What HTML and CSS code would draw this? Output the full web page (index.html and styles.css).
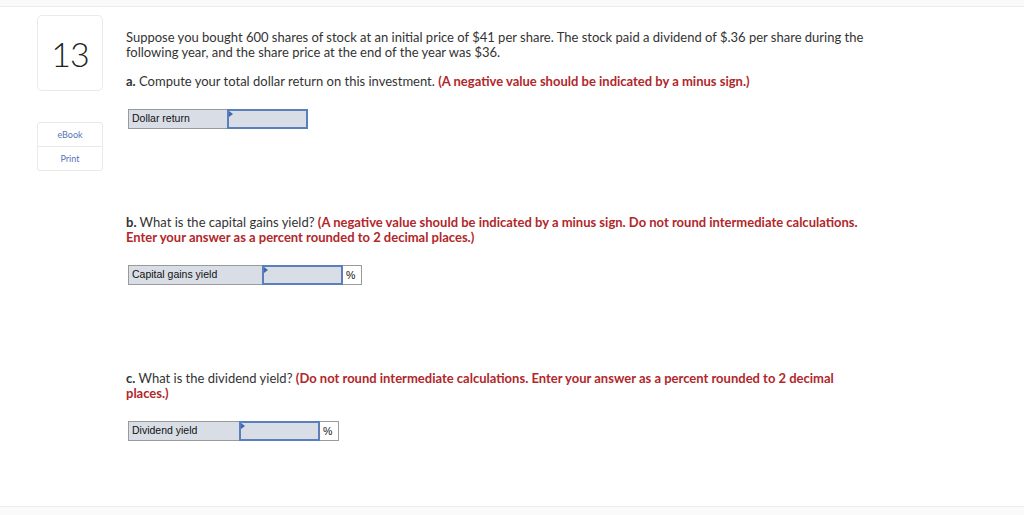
FILE: index.html
```html
<!DOCTYPE html>
<html>
<head>
<meta charset="utf-8">
<link rel="stylesheet" href="styles.css">
</head>
<body>
<div class="topbar"></div>
<div class="page">
  <aside class="side">
    <div class="qnum">13</div>
    <div class="tools">
      <div class="tool">eBook</div>
      <div class="tool">Print</div>
    </div>
  </aside>
  <main class="content">
    <p class="intro">Suppose you bought 600 shares of stock at an initial price of $41 per share. The stock paid a dividend of $.36 per share during the following year, and the share price at the end of the year was $36.</p>
    <p class="q qa"><b>a.</b> Compute your total dollar return on this investment. <span class="hint">(A negative value should be indicated by a minus sign.)</span></p>
    <div class="answer">
      <div class="label w-a">Dollar return</div>
      <div class="input"><span class="flag"></span></div>
    </div>
    <p class="q qb"><b>b.</b> What is the capital gains yield? <span class="hint">(A negative value should be indicated by a minus sign. Do not round intermediate calculations. Enter your answer as a percent rounded to 2 decimal places.)</span></p>
    <div class="answer">
      <div class="label w-b">Capital gains yield</div>
      <div class="input"><span class="flag"></span></div>
      <div class="unit">%</div>
    </div>
    <p class="q qc"><b>c.</b> What is the dividend yield? <span class="hint">(Do not round intermediate calculations. Enter your answer as a percent rounded to 2 decimal places.)</span></p>
    <div class="answer">
      <div class="label w-c">Dividend yield</div>
      <div class="input"><span class="flag"></span></div>
      <div class="unit">%</div>
    </div>
  </main>
</div>
<div class="bottombar"></div>
</body>
</html>
```

FILE: styles.css
```css
html, body {
  margin: 0;
  padding: 0;
  background: #fff;
}
body {
  width: 1024px;
  height: 515px;
  overflow: hidden;
  font-family: Lato, "Open Sans", sans-serif;
  color: #333;
}
.topbar {
  height: 6px;
  background: #fafafa;
  border-bottom: 1px solid #ececec;
}
.page {
  display: flex;
  height: 499px;
}
.side {
  width: 66px;
  margin-left: 37px;
  padding-top: 8px;
}
.qnum {
  border: 1px solid #eaeaea;
  border-radius: 5px;
  box-sizing: border-box;
  height: 76px;
  display: flex;
  align-items: center;
  justify-content: center;
  font-size: 34px;
  font-weight: 300;
  color: #222;
  letter-spacing: -1px;
}
.tools {
  margin-top: 31px;
  border: 1px solid #eaeaea;
  border-radius: 3px;
}
.tool {
  height: 23px;
  line-height: 23px;
  text-align: center;
  font-size: 9px;
  color: #5574b8;
}
.tool + .tool {
  border-top: 1px solid #eaeaea;
}
.content {
  margin-left: 23px;
  padding-top: 23px;
  width: 750px;
}
p {
  margin: 0;
  font-size: 13px;
  line-height: 15px;
}
.hint {
  color: #b1272b;
  font-weight: 700;
}
b { font-weight: 700; }
.qa { margin-top: 14px; }
.qb { margin-top: 86px; }
.qc { margin-top: 86px; }
.answer {
  display: flex;
  margin-left: 2px;
  height: 20px;
  margin-top: 20px;
  font-family: "Liberation Sans", Arial, sans-serif;
  font-size: 10.5px;
  color: #111;
}
.label {
  box-sizing: border-box;
  background: #d9dde5;
  border: 1px solid #9a9a9a;
  padding-left: 3px;
  line-height: 17px;
}
.w-a { width: 100px; }
.w-b { width: 135px; }
.w-c { width: 112px; }
.input {
  position: relative;
  box-sizing: border-box;
  width: 81px;
  background: #d9dde5;
  border: 2px solid #5b7fbd;
  margin-left: -1px;
}
.flag {
  position: absolute;
  left: 0;
  top: 0;
  width: 0;
  height: 0;
  border-top: 3px solid transparent;
  border-bottom: 3px solid transparent;
  border-left: 4px solid #3e68b0;
}
.unit {
  box-sizing: border-box;
  width: 19px;
  border: 1px solid #9a9a9a;
  border-left: none;
  background: #fff;
  padding-left: 3px;
  line-height: 18px;
}
.bottombar {
  height: 9px;
  background: #fafafa;
  border-top: 1px solid #ececec;
}
```
